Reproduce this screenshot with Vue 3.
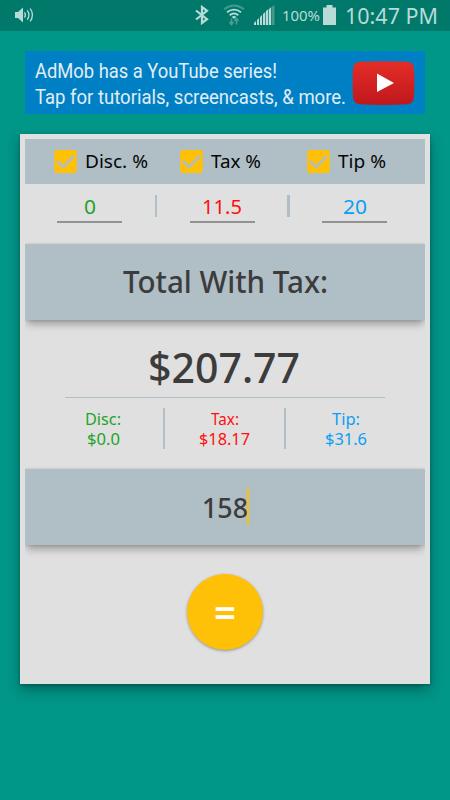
<script setup>
import { h } from 'vue'

// Single line of text fitted to a given width, with its baseline at a given height.
const Fit = (p) =>
  h('svg', { width: p.w, height: p.h, class: 'fit' }, [
    h('text', {
      x: 0, y: p.base, 'font-size': p.size, fill: 'currentColor',
      textLength: p.w, lengthAdjust: 'spacingAndGlyphs',
    }, p.text),
  ])
Fit.props = ['text', 'w', 'h', 'base', 'size']

const options = [
  { label: 'Disc. %', w: 63 },
  { label: 'Tax %', w: 50 },
  { label: 'Tip %', w: 48 },
]
const rates = [
  { value: '0', w: 12, tone: 'green' },
  { value: '11.5', w: 40, tone: 'red' },
  { value: '20', w: 24, tone: 'blue' },
]
const results = [
  { label: 'Disc:', lw: 36, value: '$0.0', vw: 33, tone: 'green' },
  { label: 'Tax:', lw: 28, value: '$18.17', vw: 51, tone: 'red' },
  { label: 'Tip:', lw: 28, value: '$31.6', vw: 42, tone: 'blue' },
]
</script>

<template>
  <div class="screen">
    <header class="status">
      <svg class="sound" width="22" height="18" viewBox="0 0 22 18">
        <path d="M1 6h3l5-4.500v15l-5-4.500H1z" fill="currentColor" />
        <path d="M10.500 6.300q1.800 2.700 0 5.400M13.300 4.300q3.200 4.700 0 9.400M16.200 2.500q4.400 6.500 0 13" fill="none" stroke="currentColor" stroke-width="1.300" />
      </svg>
      <svg class="bluetooth" width="14" height="20" viewBox="0 0 14 20">
        <path d="M1 5.500 12 14.200 7 18V2l5 3.800L1 14.500" fill="none" stroke="currentColor" stroke-width="2.200" />
      </svg>
      <svg class="wifi" width="22" height="22" viewBox="0 0 22 22">
        <g fill="none" stroke="currentColor" stroke-width="1.900">
          <path d="M1 5.300q10-7.600 20 0" opacity=".35" />
          <path d="M4 8.300q7-5.300 14 0M6.700 11.200q4.300-3.300 8.600 0" />
        </g>
        <path d="M8.700 12.700q2.300-1.500 4.600 0L11 15z" fill="currentColor" />
        <path d="M8.500 14.500v5M6.500 18l2 2.500 2-2.500M13.500 20.500v-5M11.500 17l2-2.500 2 2.500" fill="none" stroke="currentColor" stroke-width="1.500" opacity=".4" />
      </svg>
      <svg class="signal" width="21" height="20" viewBox="0 0 21 20">
        <path d="M0 20v-2l2-2v4zM3 20v-5l2-2v7zM6 20v-8l2-2v10zM9 20V9l2.300-2v13zM12 20V6l2.300-2v16zM15 20V4l2-1.700V20z" fill="currentColor" />
        <path d="M17.500 20V2L20.500 0v20z" fill="currentColor" opacity=".35" />
      </svg>
      <Fit class="percent" text="100%" :w="38" :h="31" :base="21" :size="14" />
      <svg class="battery" width="13" height="20" viewBox="0 0 13 20">
        <path d="M3.500 0h6v2.500H13V20H0V2.500h3.500z" fill="currentColor" />
      </svg>
      <Fit class="time" text="10:47 PM" :w="93" :h="31" :base="24" :size="22" />
    </header>

    <section class="ad">
      <div class="ad-copy">
        <Fit text="AdMob has a YouTube series!" :w="242" :h="26" :base="21" :size="21" />
        <Fit text="Tap for tutorials, screencasts, &amp; more." :w="311" :h="26" :base="21" :size="21" />
      </div>
      <svg class="play" width="63" height="44" viewBox="0 0 63 44">
        <defs>
          <linearGradient id="red" x2="0" y2="1">
            <stop offset="0" stop-color="#e52d27" />
            <stop offset="1" stop-color="#bf171d" />
          </linearGradient>
        </defs>
        <path d="M8 .8Q31.500-.5 55 .8 61.500 1 62 8q.8 14 0 28-.5 7-7 7.300-23.500 1.200-47 0-6.500-.3-7-7.300Q.2 22 1 8 1.500 1 8 .8z" fill="url(#red)" />
        <path d="M25 12.500 42 22 25 31z" fill="#fff" />
      </svg>
    </section>

    <main class="card">
      <div class="options">
        <label v-for="o in options" :key="o.label" class="option">
          <svg class="check" width="23" height="23" viewBox="0 0 23 23">
            <rect x=".3" width="22.400" height="23" rx="2" fill="#ffc107" />
            <path d="M3 11 9 17 20 6" fill="none" stroke="#b0bec5" stroke-width="2.600" />
          </svg>
          <Fit :text="o.label" :w="o.w" :h="45" :base="29.300" :size="18.500" />
        </label>
      </div>

      <div class="rates">
        <template v-for="(r, i) in rates" :key="r.tone">
          <i v-if="i" class="bar"></i>
          <div class="rate" :class="r.tone">
            <Fit :text="r.value" :w="r.w" :h="36.500" :base="30" :size="20" />
          </div>
        </template>
      </div>

      <div class="band heading">
        <Fit text="Total With Tax:" :w="205" :h="75" :base="49" :size="31" />
      </div>

      <div class="total">
        <Fit text="$207.77" :w="152" :h="76" :base="62.500" :size="41" />
      </div>

      <div class="results">
        <template v-for="(r, i) in results" :key="r.label">
          <i v-if="i" class="bar"></i>
          <div class="result" :class="r.tone">
            <Fit :text="r.label" :w="r.lw" :h="19.500" :base="17.300" :size="16" />
            <Fit :text="r.value" :w="r.vw" :h="19.500" :base="17.300" :size="16" />
          </div>
        </template>
      </div>

      <div class="band amount">
        <Fit text="158" :w="46" :h="75" :base="49" :size="27.500" />
        <i class="caret"></i>
      </div>

      <button class="equals"><Fit text="=" :w="22" :h="76" :base="53.500" :size="42" /></button>
    </main>
  </div>
</template>

<style>
body { margin: 0; }
</style>

<style scoped>
.screen { width: 450px; height: 800px; overflow: hidden; background: #009688; font-family: "Noto Sans", sans-serif; }
.fit { display: block; flex: none; overflow: visible; }
.status { display: flex; height: 31px; background: #00796b; color: #b8dbd7; }
.status svg { flex: none; }
.sound { margin: 6px 0 0 14px; }
.bluetooth { margin: 5px 0 0 159px; }
.wifi { margin: 4px 0 0 14px; }
.signal { margin: 5px 0 0 9px; }
.percent { margin-left: 7px; }
.battery { margin: 5px 0 0 3px; }
.time { margin-left: 9px; }
.ad { display: flex; box-sizing: border-box; width: 400px; height: 62.500px; margin: 20px 0 0 25px; background: #0080c4; color: #e3edf4; font-family: Roboto, sans-serif; }
.ad-copy { display: flex; flex-direction: column; width: 317px; margin-left: 10px; padding-top: 6px; }
.play { margin: 9.500px 0 0; flex: none; }
.card { box-sizing: border-box; width: 410px; height: 550px; margin: 20.500px 0 0 20px; padding: 5px; background: #e0e0e0; box-shadow: 0 6px 12px rgba(0, 0, 0, .3), 0 1px 3px rgba(0, 0, 0, .25); }
.options { display: flex; height: 45px; padding-left: 28.500px; background: #b0bec5; color: #060606; }
.option { display: flex; flex: none; width: 126.700px; gap: 8px; }
.option:last-child { width: 110px; }
.check { margin-top: 11px; flex: none; }
.rates { display: flex; justify-content: space-between; height: 60px; padding: 0 38px 0 32px; }
.rate { display: flex; justify-content: center; box-sizing: border-box; width: 65px; height: 38.500px; border-bottom: 2px solid #929292; }
.rates .bar { width: 2.500px; height: 22px; margin-top: 11px; background: #b0bec5; }
.green { color: #1fa32b; }
.red { color: #ff0f0c; }
.blue { color: #0a9ff5; }
.band { display: flex; justify-content: center; height: 75.500px; background: #b0bec5; color: #3c3c3c; font-weight: 500; box-shadow: 0 6px 8px -2px rgba(0, 0, 0, .32), 0 0 3px rgba(0, 0, 0, .15); clip-path: inset(-4px 0 -14px 0); }
.total { display: flex; justify-content: center; width: 320px; height: 77.500px; margin: 0 auto; border-bottom: 1px solid #b0bec5; color: #3c3c3c; font-weight: 500; }
.total .fit { margin-right: 2px; }
.results { display: flex; box-sizing: border-box; height: 71px; padding: 10px 0 0 40px; }
.result { display: flex; flex: none; flex-direction: column; align-items: center; box-sizing: border-box; width: 119px; }
.result.green { width: 98px; padding-right: 22px; }
.results .bar { flex: none; width: 2px; height: 41px; background: #b0bec5; }
.amount { position: relative; }
.caret { position: absolute; left: 222px; top: 19px; width: 2px; height: 37px; background: #ffc107; }
.equals { display: flex; justify-content: center; width: 76px; height: 76px; margin: 29px auto 0; padding: 0; border: 0; border-radius: 50%; background: #ffc107; color: #fff; font: 600 34px "Noto Sans", sans-serif; box-shadow: 0 1px 3px rgba(0, 0, 0, .35); }
</style>
